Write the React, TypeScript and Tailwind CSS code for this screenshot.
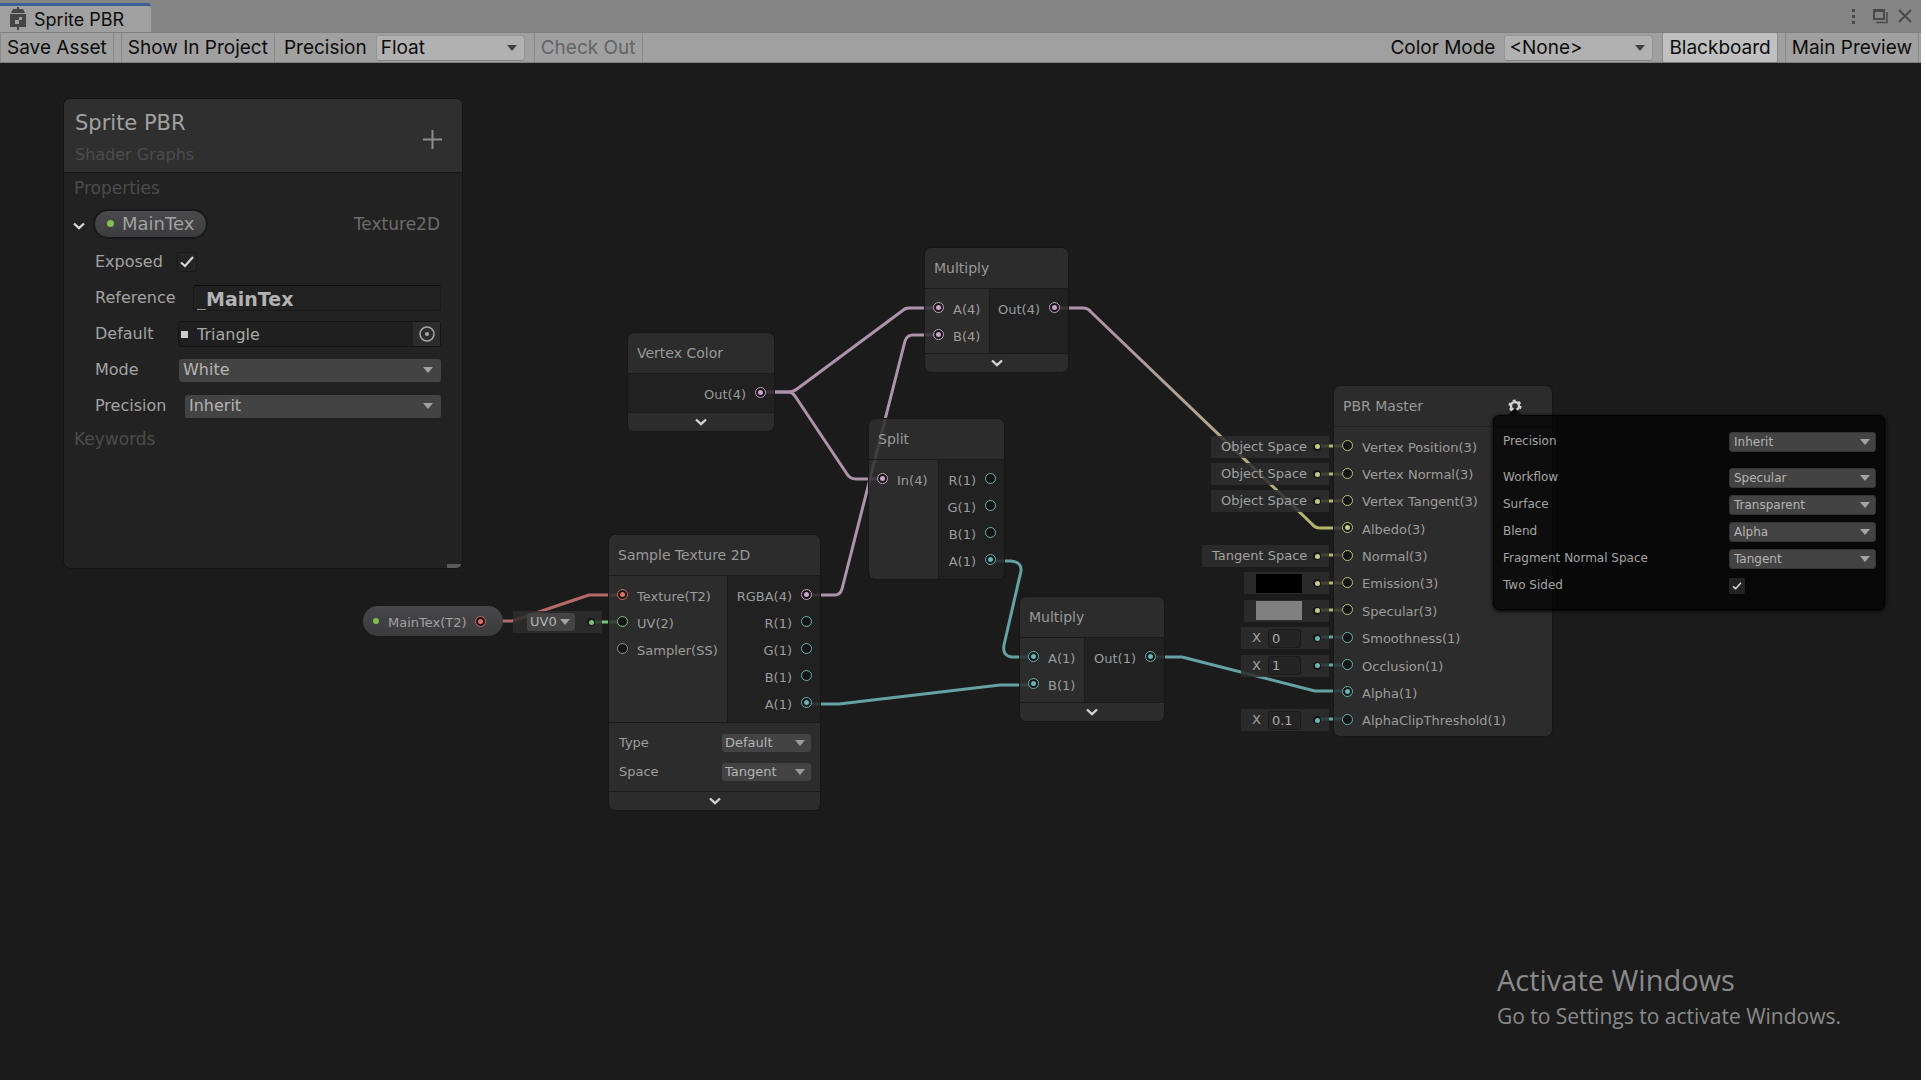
import { useState, type ReactNode } from "react";
import { clsx } from "clsx";

type Tone = "pink" | "teal" | "red" | "green" | "yellow" | "gray";

type PortData = {
  label: string;
  tone: Tone;
  linked?: boolean;
};

const RING: Record<Tone, string> = {
  pink: "border-[#c9a3c9]",
  teal: "border-[#68b3b3]",
  red: "border-[#d06a66]",
  green: "border-[#7cc17a]",
  yellow: "border-[#bfc27c]",
  gray: "border-[#909090]",
};

const FILL: Record<Tone, string> = {
  pink: "bg-[#c9a3c9]",
  teal: "bg-[#68b3b3]",
  red: "bg-[#e0706a]",
  green: "bg-[#7cc17a]",
  yellow: "bg-[#c6c983]",
  gray: "bg-[#909090]",
};

const MASTER_PORTS: PortData[] = [
  { label: "Vertex Position(3)", tone: "yellow" },
  { label: "Vertex Normal(3)", tone: "yellow" },
  { label: "Vertex Tangent(3)", tone: "yellow" },
  { label: "Albedo(3)", tone: "yellow", linked: true },
  { label: "Normal(3)", tone: "yellow" },
  { label: "Emission(3)", tone: "yellow" },
  { label: "Specular(3)", tone: "yellow" },
  { label: "Smoothness(1)", tone: "teal" },
  { label: "Occlusion(1)", tone: "teal" },
  { label: "Alpha(1)", tone: "teal", linked: true },
  { label: "AlphaClipThreshold(1)", tone: "teal" },
];

const WIRES = [
  { stroke: "#b56a68", d: "M503 558H512L589 532H622" },
  { stroke: "#ae92ab", d: "M760 329H788Q793 329 797 326L902 248Q905 245 909 245H938" },
  { stroke: "#ae92ab", d: "M760 329H788Q792 329 795 333L847 411Q850 416 856 416H883" },
  { stroke: "#ae92ab", d: "M807 532H835Q840 532 842 526L905 278Q907 272 913 272H938" },
  { stroke: "#64a2a4", d: "M990 498H1011Q1022 499 1021 508L1004 582Q1002 593 1012 594H1034" },
  { stroke: "#64a2a4", d: "M807 641H839L1000 622H1034" },
  { stroke: "url(#albedo)", d: "M1055 245H1083Q1088 245 1091 249L1312 461Q1315 465 1320 465H1347" },
  { stroke: "#64a2a4", d: "M1150 594H1182L1315 628H1347" },
];

const STUBS = [
  { stroke: "#7cc17a", y: 559, x1: 591, x2: 622 },
  { stroke: "#b4b56c", y: 383, x1: 1317, x2: 1347 },
  { stroke: "#b4b56c", y: 411, x1: 1317, x2: 1347 },
  { stroke: "#b4b56c", y: 438, x1: 1317, x2: 1347 },
  { stroke: "#b4b56c", y: 492, x1: 1317, x2: 1347 },
  { stroke: "#b4b56c", y: 520, x1: 1317, x2: 1347 },
  { stroke: "#b4b56c", y: 547, x1: 1317, x2: 1347 },
  { stroke: "#64a2a4", y: 574, x1: 1317, x2: 1347 },
  { stroke: "#64a2a4", y: 602, x1: 1317, x2: 1347 },
  { stroke: "#64a2a4", y: 656, x1: 1317, x2: 1347 },
];

function Chevron({ className }: { className?: string }) {
  return (
    <svg viewBox="0 0 12 8" className={clsx("h-2 w-3", className)} fill="none" stroke="#d2d2d2" strokeWidth="2.4">
      <path d="M1 1.5 6 6.2 11 1.5" />
    </svg>
  );
}

function Dropdown({
  id,
  label,
  value,
  className,
  arrow = "right-2",
}: {
  id?: string;
  label?: string;
  value: string;
  className?: string;
  arrow?: string;
}) {
  return (
    <span className="relative flex min-w-0 flex-auto items-center">
      <select id={id} aria-label={label} className={clsx("w-full appearance-none rounded-[3px] outline-none", className)}>
        <option>{value}</option>
      </select>
      <svg viewBox="0 0 10 6" className={clsx("pointer-events-none absolute h-[6px] w-[10px] fill-current", arrow)}>
        <path d="M0 0h10L5 6z" />
      </svg>
    </span>
  );
}

function PortDot({ tone, linked }: { tone: Tone; linked?: boolean }) {
  return (
    <span className={clsx("flex size-[11px] shrink-0 items-center justify-center rounded-full border bg-[#141414]", RING[tone])}>
      {linked && <span className={clsx("size-[5px] rounded-full", FILL[tone])} />}
    </span>
  );
}

function Port({ port, side }: { port: PortData; side: "in" | "out" }) {
  return (
    <div className={clsx("flex min-h-0 flex-[1_0_27px] items-center gap-[9px] px-2", side === "out" && "flex-row-reverse")}>
      <PortDot tone={port.tone} linked={port.linked} />
      <span className="pt-1 whitespace-nowrap">{port.label}</span>
    </div>
  );
}

function GraphNode({
  title,
  x,
  y,
  w,
  inputs = [],
  outputs = [],
  inputWidth = 0,
  collapsible = true,
  children,
}: {
  title: string;
  x: number;
  y: number;
  w: number;
  inputs?: PortData[];
  outputs?: PortData[];
  inputWidth?: number;
  collapsible?: boolean;
  children?: ReactNode;
}) {
  return (
    <section
      className="absolute overflow-hidden rounded-md text-[13px] leading-4 text-[#9c9c9c] shadow-[0_0_0_1px_#171717]"
      style={{ left: x, top: y, width: w }}
    >
      <h2 className="flex h-10 items-center bg-[#2f2f2f]/85 px-[9px] text-[14px] text-[#999999]">{title}</h2>
      <div className="flex border-t border-[#1b1b1b]">
        {inputs.length > 0 && (
          <div className="border-r border-[#1b1b1b] bg-[#2f2f2f]/85 py-[5px]" style={{ width: inputWidth }}>
            {inputs.map((port) => (
              <div key={port.label} className="flex h-[27px]">
                <Port port={port} side="in" />
              </div>
            ))}
          </div>
        )}
        <div className="flex-1 bg-[#222222]/85 pt-[5px] pb-[6px]">
          {outputs.map((port) => (
            <div key={port.label} className="flex h-[27px]">
              <Port port={port} side="out" />
            </div>
          ))}
        </div>
      </div>
      {children}
      {collapsible && (
        <button
          type="button"
          aria-label={`Collapse ${title}`}
          className="flex h-[19px] w-full items-center justify-center border-t border-[#1b1b1b] bg-[#2f2f2f]/85"
        >
          <Chevron />
        </button>
      )}
    </section>
  );
}

function SlotDot({ tone }: { tone: Tone }) {
  return (
    <span className="flex size-2 shrink-0 items-center justify-center rounded-full bg-[#151515]">
      <span className={clsx("size-[5px] rounded-full", FILL[tone])} />
    </span>
  );
}

function Slot({ tone, className, children }: { tone: Tone; className?: string; children?: ReactNode }) {
  return (
    <div className="flex flex-1 items-center justify-end">
      <div className={clsx("flex h-[22px] items-center justify-between bg-[#2d2d2d]/85 pr-2", className)}>
        {children}
        <SlotDot tone={tone} />
      </div>
    </div>
  );
}

function NumberSlot({ name, value }: { name: string; value: string }) {
  return (
    <Slot tone="teal" className="w-[88px] pl-[11px]">
      <label className="flex items-center gap-[7px]">
        X
        <input
          aria-label={name}
          defaultValue={value}
          className="h-[19px] w-[33px] rounded-[3px] border border-[#1a1a1a] bg-[#242424] px-[3px] text-[13px] text-[#ababab] outline-none"
        />
      </label>
    </Slot>
  );
}

function Toolbar() {
  const button = "h-full border-x border-[#8a8a8a] px-[6px]";
  const select = "mt-px h-[26px] rounded border border-[#959595] border-b-[#808080] bg-[#b1b1b1] pl-1 text-[19px]";
  const arrow = "right-2 text-[#404040]";

  return (
    <div className="flex h-[31px] items-center border-t border-b border-[#808080] bg-[#a0a0a0] pr-[2px] text-[19px] leading-6 whitespace-nowrap text-[#0c0c0c]">
      <button type="button" className={button}>Save Asset</button>
      <button type="button" className={clsx(button, "ml-[7px]")}>Show In Project</button>
      <label htmlFor="precision" className="mr-[9px] ml-[9px]">Precision</label>
      <div className="flex w-[149px]">
        <Dropdown id="precision" value="Float" className={select} arrow={arrow} />
      </div>
      <button type="button" disabled className={clsx(button, "ml-[9px] text-[#646464]")}>Check Out</button>
      <div className="flex-1" />
      <label htmlFor="color-mode" className="mr-[9px]">Color Mode</label>
      <div className="flex w-[149px]">
        <Dropdown id="color-mode" value="<None>" className={select} arrow={arrow} />
      </div>
      <button type="button" className={clsx(button, "ml-[9px] bg-[#c0c0c0]")}>Blackboard</button>
      <button type="button" className={clsx(button, "ml-[7px]")}>Main Preview</button>
    </div>
  );
}

function TitleBar() {
  return (
    <header className="flex h-8 items-end justify-between bg-[#858585] text-[18px] text-[#0c0c0c]">
      <div className="flex h-[29px] w-[151px] items-center gap-2 rounded-tr border-t-[3px] border-[#3c5f97] bg-[#a0a0a0] pl-[10px]">
        <svg viewBox="0 0 16 24" className="h-6 w-4" fill="#454545">
          <path d="M7 0h2v3H7zM3 2h10l2 4H1zM0 7h16v13H0zM7 20h2v3H7z" />
          <path fill="#a0a0a0" d="M9 10h3v3H9zM5 13h4v4H5z" />
        </svg>
        <h1>Sprite PBR</h1>
      </div>
      <div className="flex h-full items-center gap-[9px] pr-2 text-[#4a4a4a]">
        <button type="button" aria-label="Menu">
          <svg viewBox="0 0 16 16" className="size-4" fill="currentColor">
            <path d="M5 1h3v3H5zM5 7h3v3H5zM5 13h3v3H5z" />
          </svg>
        </button>
        <button type="button" aria-label="Maximize">
          <svg viewBox="0 0 16 16" className="size-4" fill="none" stroke="currentColor">
            <path strokeWidth="2" d="M2 2v9h10V2" />
            <path strokeWidth="3" d="M1 2.5h12" />
            <path strokeWidth="1.5" d="M15 4v10.5H4" />
          </svg>
        </button>
        <button type="button" aria-label="Close">
          <svg viewBox="0 0 16 16" className="size-4" fill="none" stroke="currentColor" strokeWidth="2">
            <path d="M2 2l12 12M14 2 2 14" />
          </svg>
        </button>
      </div>
    </header>
  );
}

function Blackboard() {
  const [exposed, setExposed] = useState(true);
  const select = "h-[23px] bg-[#434343] pl-1 text-[16px] leading-5 text-[#b4b4b4]";

  return (
    <aside className="absolute top-9 left-16 flex h-[469px] w-[398px] flex-col overflow-hidden rounded-md bg-[#222222] text-[16px] leading-5 text-[#a2a2a2] shadow-[0_0_0_1px_#151515]">
      <div className="flex h-[74px] items-center justify-between border-b border-[#191919] bg-[#2f2f2f] pr-5 pl-[11px]">
        <div className="pt-[6px]">
          <h2 className="text-[21px] leading-8">Sprite PBR</h2>
          <p className="leading-8 text-[#4c4c4c]">Shader Graphs</p>
        </div>
        <button type="button" aria-label="Add property" className="pt-[7px]">
          <svg viewBox="0 0 19 19" className="size-[19px]" stroke="#8e8e8e" strokeWidth="2">
            <path d="M9.5 0v19M0 9.5h19" />
          </svg>
        </button>
      </div>
      <h3 className="flex h-[30px] items-center pl-[10px] text-[17px] text-[#4c4c4c]">Properties</h3>
      <div className="flex h-[41px] items-center pr-[22px] pl-[9px]">
        <button type="button" aria-label="Toggle MainTex" className="mr-2">
          <Chevron className="mt-1" />
        </button>
        <span className="flex h-[30px] items-center gap-2 rounded-full border-2 border-[#181818] bg-linear-to-b from-[#4a4a4c] to-[#3c3c3e] px-3 text-[18px]">
          <span className="size-[7px] rounded-full bg-[#7fbf52]" />
          MainTex
        </span>
        <span className="ml-auto text-[17px] text-[#6c6c6c]">Texture2D</span>
      </div>
      <div className="pr-[21px] pl-[31px]">
        <label className="flex h-9 items-center gap-[14px]">
          Exposed
          <input type="checkbox" className="peer sr-only" checked={exposed} onChange={() => setExposed(!exposed)} />
          <span className="flex size-5 items-center justify-center rounded-[3px] border border-[#191919] bg-[#242424]">
            {exposed && (
              <svg viewBox="0 0 14 12" className="h-3 w-[14px]" fill="none" stroke="#d6d6d6" strokeWidth="2.2">
                <path d="M1 6.5 5 10 13 1" />
              </svg>
            )}
          </span>
        </label>
        <label className="flex h-9 items-center gap-[17px]">
          Reference
          <input
            defaultValue="_MainTex"
            className="h-[26px] w-0 flex-1 rounded-[3px] border border-[#191919] border-t-[#0d0d0d] bg-[#212121] px-[3px] pt-[2px] text-[19px] leading-5 font-bold text-[#b2b2b2] outline-none"
          />
        </label>
        <div className="flex h-9 items-center">
          <span id="default-label" className="w-[83px]">Default</span>
          <div className="flex h-[26px] flex-1 items-center rounded-[3px] border border-[#131313] bg-[#1f1f1f]">
            <span className="mx-[2px] size-[7px] bg-[#cccccc]" />
            <input
              aria-labelledby="default-label"
              defaultValue="Triangle"
              className="h-full w-0 flex-1 bg-transparent pl-[7px] text-[16px] text-[#a8a8a8] outline-none"
            />
            <button type="button" aria-label="Select texture" className="flex h-full w-[27px] items-center justify-center bg-[#2c2c2c]">
              <svg viewBox="0 0 16 16" className="size-4" fill="none" stroke="#a8a8a8" strokeWidth="1.5">
                <circle cx="8" cy="8" r="7" />
                <circle cx="8" cy="8" r="2" fill="#a8a8a8" stroke="none" />
              </svg>
            </button>
          </div>
        </div>
        <div className="flex h-9 items-center">
          <label htmlFor="mode" className="w-[84px]">Mode</label>
          <Dropdown id="mode" value="White" className={select} />
        </div>
        <div className="flex h-9 items-center">
          <label htmlFor="property-precision" className="w-[90px]">Precision</label>
          <Dropdown id="property-precision" value="Inherit" className={select} />
        </div>
      </div>
      <h3 className="flex h-[30px] items-center pl-[10px] text-[17px] text-[#4c4c4c]">Keywords</h3>
      <div className="mt-auto mr-px h-1 w-[14px] self-end bg-[#5a5a5a]" />
    </aside>
  );
}

function SettingsRow({ id, label, children }: { id: string; label: string; children: ReactNode }) {
  return (
    <div className="flex h-[27px] items-center">
      <label htmlFor={id} className="flex-1 pb-px">{label}</label>
      <div className="flex w-[147px]">{children}</div>
    </div>
  );
}

function MasterSettings() {
  const [twoSided, setTwoSided] = useState(true);
  const select = "h-5 border border-[#333333] bg-[#434343] pl-1 text-[12px] leading-4 text-[#b4b4b4]";

  return (
    <div className="absolute top-[352px] left-[1493px] w-[392px] rounded-md border border-black bg-black/70 pt-[12px] pr-2 pb-[10px] pl-[9px] text-[12px] leading-4 text-[#a4a4a4] shadow-[0_1px_4px_#000000]">
      <svg viewBox="0 0 16 8" className="absolute -top-2 left-[13px] h-2 w-4" fill="#0b0b0b">
        <path d="M0 8 8 0l8 8z" />
      </svg>
      <SettingsRow id="master-precision" label="Precision">
        <Dropdown id="master-precision" value="Inherit" className={select} arrow="right-[6px]" />
      </SettingsRow>
      <div className="mt-[9px]">
        <SettingsRow id="workflow" label="Workflow">
          <Dropdown id="workflow" value="Specular" className={select} arrow="right-[6px]" />
        </SettingsRow>
        <SettingsRow id="surface" label="Surface">
          <Dropdown id="surface" value="Transparent" className={select} arrow="right-[6px]" />
        </SettingsRow>
        <SettingsRow id="blend" label="Blend">
          <Dropdown id="blend" value="Alpha" className={select} arrow="right-[6px]" />
        </SettingsRow>
        <SettingsRow id="normal-space" label="Fragment Normal Space">
          <Dropdown id="normal-space" value="Tangent" className={select} arrow="right-[6px]" />
        </SettingsRow>
        <SettingsRow id="two-sided" label="Two Sided">
          <span className="relative flex size-4 items-center justify-center rounded-[2px] bg-[#232323]">
            <input
              id="two-sided"
              type="checkbox"
              className="absolute inset-0 appearance-none"
              checked={twoSided}
              onChange={() => setTwoSided(!twoSided)}
            />
            {twoSided && (
              <svg viewBox="0 0 14 12" className="pointer-events-none h-2 w-[10px]" fill="none" stroke="#d6d6d6" strokeWidth="2.4">
                <path d="M1 6.5 5 10 13 1" />
              </svg>
            )}
          </span>
        </SettingsRow>
      </div>
    </div>
  );
}

function MasterNode() {
  return (
    <>
      <div className="absolute top-[370px] left-[1190px] flex h-[301px] w-[139px] flex-col text-[13px] leading-4 text-[#a2a2a2]">
        <Slot tone="yellow" className="w-[118px] pl-[10px]">Object Space</Slot>
        <Slot tone="yellow" className="w-[118px] pl-[10px]">Object Space</Slot>
        <Slot tone="yellow" className="w-[118px] pl-[10px]">Object Space</Slot>
        <div className="flex-1" />
        <Slot tone="yellow" className="w-[127px] pl-[10px]">Tangent Space</Slot>
        <Slot tone="yellow" className="w-[85px] pl-3">
          <button type="button" aria-label="Emission color" className="h-[19px] w-[46px] bg-black" />
        </Slot>
        <Slot tone="yellow" className="w-[85px] pl-3">
          <button type="button" aria-label="Specular color" className="h-[19px] w-[46px] bg-[#808080]" />
        </Slot>
        <NumberSlot name="Smoothness" value="0" />
        <NumberSlot name="Occlusion" value="1" />
        <div className="flex-1" />
        <NumberSlot name="Alpha clip threshold" value="0.1" />
      </div>
      <section className="absolute top-[323px] left-[1334px] flex h-[350px] w-[218px] flex-col overflow-hidden rounded-md bg-[#2f2f2f]/85 text-[13px] leading-4 text-[#9c9c9c] shadow-[0_0_0_1px_#171717]">
        <div className="flex h-10 items-center justify-between pr-[30px] pl-[9px]">
          <h2 className="text-[14px] text-[#999999]">PBR Master</h2>
          <button type="button" aria-label="Master settings">
            <svg viewBox="0 0 14 14" className="size-[14px]" fill="none" stroke="#d0d0d0">
              <circle cx="7" cy="7" r="4" strokeWidth="2.4" />
              <circle cx="7" cy="7" r="5.6" strokeWidth="2" strokeDasharray="2.9 2.96" />
            </svg>
          </button>
        </div>
        <div className="flex flex-1 flex-col border-t border-[#202020] pt-[5px] pb-[3px]">
          {MASTER_PORTS.map((port) => (
            <Port key={port.label} port={port} side="in" />
          ))}
        </div>
      </section>
    </>
  );
}

export default function App() {
  const nodeSelect = "h-[18px] bg-[#434343] pl-[3px] text-[13px] leading-4 text-[#b4b4b4]";

  return (
    <div className="h-screen bg-white pr-[5px]">
      <div className="flex h-full flex-col font-[Inter,sans-serif]">
        <TitleBar />
        <Toolbar />
        <main className="relative flex-1 overflow-hidden bg-[#1b1b1b] font-['DejaVu_Sans',sans-serif] text-[#a2a2a2]">
          <svg className="absolute inset-0 h-full w-full" fill="none" strokeWidth="3">
            <defs>
              <linearGradient id="albedo" gradientUnits="userSpaceOnUse" x1="1086" y1="245" x2="1316" y2="465">
                <stop offset="0" stopColor="#ae92ab" />
                <stop offset="1" stopColor="#b4b56c" />
              </linearGradient>
            </defs>
            {WIRES.map((wire) => (
              <path key={wire.d} d={wire.d} stroke={wire.stroke} strokeLinejoin="round" />
            ))}
            {STUBS.map((stub) => (
              <line key={stub.y} x1={stub.x1} x2={stub.x2} y1={stub.y} y2={stub.y} stroke={stub.stroke} />
            ))}
          </svg>

          <GraphNode
            title="Multiply"
            x={925}
            y={185}
            w={143}
            inputWidth={65}
            inputs={[
              { label: "A(4)", tone: "pink", linked: true },
              { label: "B(4)", tone: "pink", linked: true },
            ]}
            outputs={[{ label: "Out(4)", tone: "pink", linked: true }]}
          />
          <GraphNode
            title="Vertex Color"
            x={628}
            y={270}
            w={146}
            outputs={[{ label: "Out(4)", tone: "pink", linked: true }]}
          />
          <GraphNode
            title="Split"
            x={869}
            y={356}
            w={135}
            inputWidth={70}
            collapsible={false}
            inputs={[{ label: "In(4)", tone: "pink", linked: true }]}
            outputs={[
              { label: "R(1)", tone: "teal" },
              { label: "G(1)", tone: "teal" },
              { label: "B(1)", tone: "teal" },
              { label: "A(1)", tone: "teal", linked: true },
            ]}
          />
          <GraphNode
            title="Sample Texture 2D"
            x={609}
            y={472}
            w={211}
            inputWidth={119}
            inputs={[
              { label: "Texture(T2)", tone: "red", linked: true },
              { label: "UV(2)", tone: "green" },
              { label: "Sampler(SS)", tone: "gray" },
            ]}
            outputs={[
              { label: "RGBA(4)", tone: "pink", linked: true },
              { label: "R(1)", tone: "teal" },
              { label: "G(1)", tone: "teal" },
              { label: "B(1)", tone: "teal" },
              { label: "A(1)", tone: "teal", linked: true },
            ]}
          >
            <div className="border-t border-[#1b1b1b] bg-[#2f2f2f]/85 py-[5px] pr-[9px] pl-[10px]">
              <div className="flex h-[29px] items-center">
                <label htmlFor="type" className="flex-1">Type</label>
                <div className="flex w-[89px]">
                  <Dropdown id="type" value="Default" className={nodeSelect} arrow="right-[6px]" />
                </div>
              </div>
              <div className="flex h-[29px] items-center">
                <label htmlFor="space" className="flex-1">Space</label>
                <div className="flex w-[89px]">
                  <Dropdown id="space" value="Tangent" className={nodeSelect} arrow="right-[6px]" />
                </div>
              </div>
            </div>
          </GraphNode>
          <GraphNode
            title="Multiply"
            x={1020}
            y={534}
            w={144}
            inputWidth={65}
            inputs={[
              { label: "A(1)", tone: "teal", linked: true },
              { label: "B(1)", tone: "teal", linked: true },
            ]}
            outputs={[{ label: "Out(1)", tone: "teal", linked: true }]}
          />

          <div className="absolute top-[543px] left-[363px] flex h-[30px] w-[140px] items-center rounded-full bg-linear-to-b from-[#474749] to-[#3b3b3d] pr-[17px] pl-[10px] text-[13px] leading-4">
            <span className="size-[6px] rounded-full bg-[#7fbf52]" />
            <span className="mr-auto ml-[9px] pt-1">MainTex(T2)</span>
            <PortDot tone="red" linked />
          </div>
          <div className="absolute top-[548px] left-[513px] flex h-[22px] w-[89px] items-center justify-between bg-[#2d2d2d]/85 pr-[7px] pl-[14px]">
            <div className="flex w-12">
              <Dropdown label="UV channel" value="UV0" className={nodeSelect} arrow="right-[5px]" />
            </div>
            <SlotDot tone="green" />
          </div>

          <MasterNode />
          <MasterSettings />
          <Blackboard />

          <div className="absolute right-20 bottom-12 font-['Open_Sans',sans-serif] text-[#8a8a8a]">
            <p className="text-[29px] leading-10">Activate Windows</p>
            <p className="text-[21px] leading-8">Go to Settings to activate Windows.</p>
          </div>
        </main>
      </div>
    </div>
  );
}
